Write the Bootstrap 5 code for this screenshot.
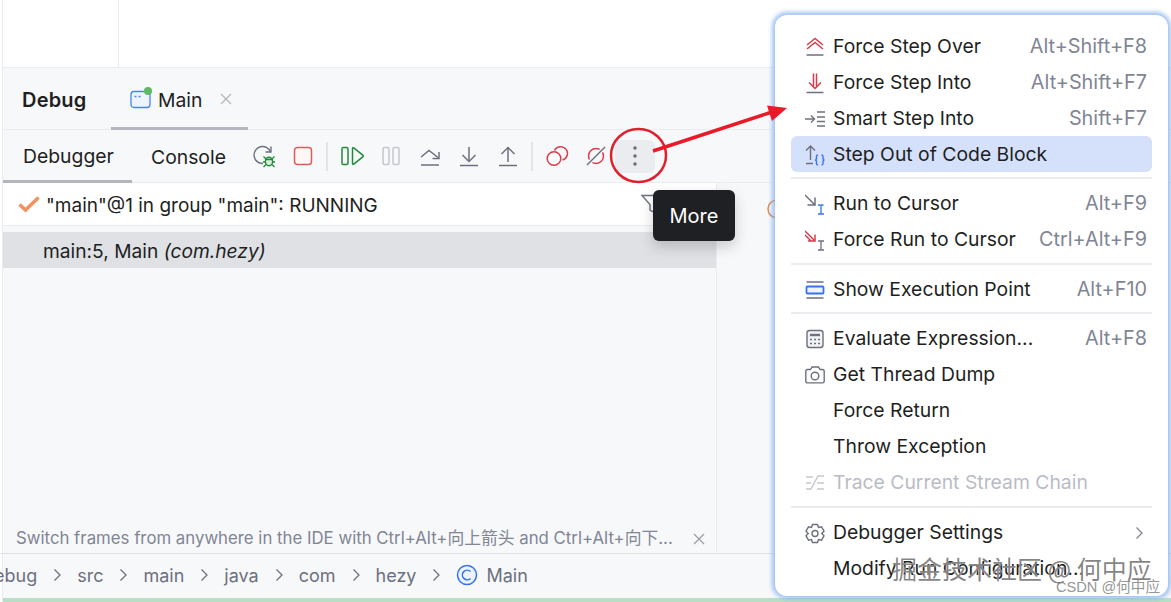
<!doctype html>
<html lang="en">
<head>
<meta charset="utf-8">
<title>Debug</title>
<link href="https://cdn.jsdelivr.net/npm/bootstrap@5.3.0/dist/css/bootstrap.min.css" rel="stylesheet">
<style>
html,body{height:602px;overflow:hidden;background:#fff}
body{font-family:Inter,"Noto Sans CJK SC",sans-serif;color:#1e1f22;font-size:19.35px;position:relative}
svg{display:block;flex:none}
.ide-shell{height:602px;margin-left:2px;border-left:1px solid #ebecf0;background:#f7f8fa}
.editor-strip{height:68px;background:#fff;border-bottom:1px solid #ebecf0}
.editor-gutter{width:116px;height:67px;border-right:1px solid #ebecf0}
.tool-head{height:62px;border-bottom:1px solid #ebecf0}
.tool-title{width:108px;padding:2px 0 0 19px;font-weight:600;font-size:20px;letter-spacing:.2px}
.main-tab{width:137px;height:62px;border-bottom:3px solid #b4b6bd;padding:2px 0 0 19px;gap:6px;margin-bottom:-1px}
.main-tab span{padding-top:5px}
.main-tab .x-mark{margin-left:11px}
.tool-bar{height:53px;border-bottom:1px solid #ebecf0}
.sub-tab{height:53px;padding:3px 0 0 20px;width:129px;border-bottom:3px solid #b4b6bd;margin-bottom:-1px}
.sub-tab-plain{width:112px;padding:3px 0 0 19px}
.ico-btn{width:39px;height:33px;border-radius:6px}
.ico-btn.hovered{background:#ebecf0;width:40px}
.tb-sep{width:10px}
.tb-sep i{display:block;width:2px;height:29px;background:#e3e5ea}
.work-area{height:370px}
.frames-pane{width:714px;border-right:1px solid #ebecf0}
.thread-row{height:43px;background:#fff;border-bottom:1px solid #ebecf0;padding:0 0 0 15px;gap:6px;font-size:19px}
.thread-row span{padding-top:5px}
.filter-ico{margin-right:52px}
.frame-row{height:36px;margin-top:6px;background:#dfe1e5;padding:3px 0 0 40px;font-size:19.2px}
.hint-row{padding:3px 11px 0 13px;color:#818594;font-size:16.8px;height:32px}
.side-arc{margin-left:50px}
.crumbs{height:45px;color:#6c707e;font-size:18px;margin-left:-9px;padding-bottom:2px}
.crumbs span{white-space:nowrap}
.crumb-gap{margin:0 16px}
.status-line{height:4px;background:#b8dfc6}
.tip-more{position:absolute;left:653px;top:190px;width:82px;height:51px;background:#1f2024;color:#fff;font-size:20px;border-radius:6px;box-shadow:0 6px 14px rgba(0,0,0,.18);z-index:5}
.dropdown-menu.debug-menu{position:absolute;left:775px;top:15px;width:393px;height:581px;margin:0;padding:13px 16px;background:#fff;border:0;border-radius:12px;box-shadow:0 0 4px 3px rgba(130,175,240,.75);z-index:6;--bs-dropdown-font-size:19.35px}
.debug-menu .dropdown-item{height:36px;padding:1px 5px 0 14px;gap:8px;color:#1e1f22;font-size:19.35px;border-radius:6px;background:transparent}
.debug-menu .dropdown-item.active{background:#d5e1fb;color:#1e1f22}
.debug-menu .dropdown-item.disabled{color:#b9bcc6}
.debug-menu .dropdown-divider{margin:5px 0 6.5px;height:2px;border-top:2px solid #ebecf0;opacity:1}
.ico-slot{width:20px;height:22px}
.key-hint{margin-left:auto;color:#818594;font-size:19.85px}
.pen-layer{position:absolute;left:0;top:0;z-index:7;pointer-events:none}
.stamp-big{position:absolute;left:892px;top:551px;font-size:25px;color:rgba(70,70,70,.66);z-index:8;font-family:"Noto Sans CJK SC",sans-serif;line-height:34px;white-space:nowrap;text-shadow:0 0 1px #fff}
.stamp-small{position:absolute;left:1056px;top:578px;font-size:14.6px;color:rgba(120,120,120,.8);z-index:8;line-height:18px;font-family:"Liberation Sans","Noto Sans CJK SC",sans-serif;white-space:nowrap}
</style>
</head>
<body>
<div class="ide-shell d-flex flex-column">
  <div class="editor-strip"><div class="editor-gutter"></div></div>

  <div class="tool-head d-flex align-items-center">
    <div class="tool-title">Debug</div>
    <div class="main-tab d-flex align-items-center">
      <svg width="22" height="24" viewBox="0 0 22 24"><rect x="1" y="4.500" width="19" height="16" rx="3" fill="#edf3ff" stroke="#4682fa" stroke-width="1.300"/><path d="M4.500 9.500h2M8.500 9.500h2" stroke="#4682fa" stroke-width="1.300"/><circle cx="18" cy="4" r="4" fill="#5fb865"/></svg>
      <span>Main</span>
      <svg class="x-mark" width="14" height="14" viewBox="0 0 14 14"><path d="M2 2l10 10M12 2L2 12" stroke="#b4b8bf" stroke-width="1.400"/></svg>
    </div>
  </div>

  <div class="tool-bar d-flex align-items-center">
    <div class="sub-tab d-flex align-items-center">Debugger</div>
    <div class="sub-tab-plain">Console</div>
    <div class="ico-btn d-flex align-items-center justify-content-center">
      <svg width="26" height="26" viewBox="0 0 26 26" fill="none"><path d="M12 20.500A8.500 8.500 0 1 1 19.500 9" stroke="#6c707e" stroke-width="1.400"/><path d="M20 3.500V9h-5.500" stroke="#6c707e" stroke-width="1.400"/><ellipse cx="18" cy="18.500" rx="3.600" ry="4.200" fill="#d8f0dc" stroke="#208a3c" stroke-width="1.400"/><path d="M12.500 13.500l2.500 2.500M23.500 13.500L21 16M12 19h2.500M24 19h-2.500M12.500 24l2.500-2.500M23.500 24L21 21.500M14.500 16.500h7" stroke="#208a3c" stroke-width="1.300"/></svg>
    </div>
    <div class="ico-btn d-flex align-items-center justify-content-center">
      <svg width="24" height="24" viewBox="0 0 24 24"><rect x="3.500" y="3.500" width="17" height="17" rx="3" fill="#fff6f6" stroke="#db5c5c" stroke-width="1.500"/></svg>
    </div>
    <div class="tb-sep d-flex justify-content-center"><i></i></div>
    <div class="ico-btn d-flex align-items-center justify-content-center">
      <svg width="26" height="24" viewBox="0 0 26 24" fill="none" stroke="#208a3c" stroke-width="1.500"><rect x="3" y="3.500" width="6" height="17" rx="1.500"/><path d="M13.500 4.500v15a.8.8 0 0 0 1.300.6L24 12.700a1 1 0 0 0 0-1.400L14.800 3.900a.8.8 0 0 0-1.300.6z"/></svg>
    </div>
    <div class="ico-btn d-flex align-items-center justify-content-center">
      <svg width="24" height="24" viewBox="0 0 24 24" fill="none" stroke="#c4c7ce" stroke-width="1.500"><rect x="4" y="3.500" width="6" height="17" rx="1.500"/><rect x="14" y="3.500" width="6" height="17" rx="1.500"/></svg>
    </div>
    <div class="ico-btn d-flex align-items-center justify-content-center">
      <svg width="24" height="24" viewBox="0 0 24 24" fill="none" stroke="#6c707e" stroke-width="1.500"><path d="M3 13l8-6.500L20 13.500"/><path d="M21 8v6.500h-6.500"/><path d="M3 21h18"/></svg>
    </div>
    <div class="ico-btn d-flex align-items-center justify-content-center">
      <svg width="24" height="24" viewBox="0 0 24 24" fill="none" stroke="#6c707e" stroke-width="1.500"><path d="M12 3v14"/><path d="M5.500 11l6.500 6.500 6.500-6.500"/><path d="M3 21.500h18"/></svg>
    </div>
    <div class="ico-btn d-flex align-items-center justify-content-center">
      <svg width="24" height="24" viewBox="0 0 24 24" fill="none" stroke="#6c707e" stroke-width="1.500"><path d="M12 18V3.500"/><path d="M5.500 10L12 3.500 18.500 10"/><path d="M3 21.500h18"/></svg>
    </div>
    <div class="tb-sep d-flex justify-content-center"><i></i></div>
    <div class="ico-btn d-flex align-items-center justify-content-center">
      <svg width="24" height="24" viewBox="0 0 24 24" fill="none" stroke="#db3b4b" stroke-width="1.500"><circle cx="9" cy="14.500" r="6.800" fill="#fff"/><path d="M9.500 6.500a6.800 6.800 0 1 1 8 9.500"/></svg>
    </div>
    <div class="ico-btn d-flex align-items-center justify-content-center">
      <svg width="24" height="24" viewBox="0 0 24 24" fill="none" stroke-width="1.500"><circle cx="12" cy="12" r="7.500" stroke="#db3b4b"/><path d="M3 21L21 3" stroke="#f7f8fa" stroke-width="4"/><path d="M3 21L21 3" stroke="#6c707e"/></svg>
    </div>
    <div class="ico-btn hovered d-flex align-items-center justify-content-center">
      <svg width="6" height="22" viewBox="0 0 6 22" fill="#6c707e"><circle cx="3" cy="3" r="1.800"/><circle cx="3" cy="11" r="1.800"/><circle cx="3" cy="19" r="1.800"/></svg>
    </div>
  </div>

  <div class="work-area d-flex">
    <div class="frames-pane d-flex flex-column">
      <div class="thread-row d-flex align-items-center">
        <svg width="22" height="18" viewBox="0 0 22 18" fill="none"><path d="M1.500 9.500l6 5.500L20.500 2.500" stroke="#f0935f" stroke-width="3.500"/></svg>
        <span class="flex-grow-1">"main"@1 in group "main": RUNNING</span>
        <svg class="filter-ico" width="24" height="22" viewBox="0 0 24 22" fill="#fff" stroke="#6c707e" stroke-width="1.400"><path d="M2 2.500h20l-7.500 9v8l-4.500-2.500v-5.500z"/></svg>
      </div>
      <div class="frame-row d-flex align-items-center"><span>main:5, Main <em>(com.hezy)</em></span></div>
      <div class="hint-row mt-auto d-flex align-items-center justify-content-between">
        <span>Switch frames from anywhere in the IDE with Ctrl+Alt+向上箭头 and Ctrl+Alt+向下...</span>
        <svg width="12" height="12" viewBox="0 0 12 12"><path d="M1 1l10 10M11 1L1 11" stroke="#9a9ea8" stroke-width="1.300"/></svg>
      </div>
    </div>
    <div class="flex-grow-1 pt-3">
      <svg class="side-arc" width="10" height="20" viewBox="0 0 10 20" fill="none"><path d="M10 1A9 9 0 0 0 10 19" stroke="#e08855" stroke-width="1.500"/></svg>
    </div>
  </div>

  <div class="crumbs d-flex align-items-center border-top">
    <span>ebug</span>
    <svg class="crumb-gap" width="8" height="14" viewBox="0 0 8 14" fill="none"><path d="M1.500 1.500L7 7l-5.500 5.500" stroke="#6c707e" stroke-width="1.300"/></svg>
    <span>src</span>
    <svg class="crumb-gap" width="8" height="14" viewBox="0 0 8 14" fill="none"><path d="M1.500 1.500L7 7l-5.500 5.500" stroke="#6c707e" stroke-width="1.300"/></svg>
    <span>main</span>
    <svg class="crumb-gap" width="8" height="14" viewBox="0 0 8 14" fill="none"><path d="M1.500 1.500L7 7l-5.500 5.500" stroke="#6c707e" stroke-width="1.300"/></svg>
    <span>java</span>
    <svg class="crumb-gap" width="8" height="14" viewBox="0 0 8 14" fill="none"><path d="M1.500 1.500L7 7l-5.500 5.500" stroke="#6c707e" stroke-width="1.300"/></svg>
    <span>com</span>
    <svg class="crumb-gap" width="8" height="14" viewBox="0 0 8 14" fill="none"><path d="M1.500 1.500L7 7l-5.500 5.500" stroke="#6c707e" stroke-width="1.300"/></svg>
    <span>hezy</span>
    <svg class="crumb-gap" width="8" height="14" viewBox="0 0 8 14" fill="none"><path d="M1.500 1.500L7 7l-5.500 5.500" stroke="#6c707e" stroke-width="1.300"/></svg>
    <svg class="me-2" width="22" height="22" viewBox="0 0 22 22" fill="#edf3ff" stroke="#3574f0" stroke-width="1.500"><circle cx="11" cy="11" r="9.500"/><path d="M14.500 7.500a4.800 4.800 0 1 0 0 7" fill="none"/></svg>
    <span>Main</span>
  </div>
  <div class="status-line"></div>
</div>

<div class="tip-more d-flex align-items-center justify-content-center">More</div>

<div class="dropdown-menu show debug-menu">
  <div class="dropdown-item d-flex align-items-center">
    <span class="ico-slot d-flex align-items-center"><svg width="20" height="22" viewBox="0 0 20 22" fill="none" stroke="#db3b4b" stroke-width="1.500"><path d="M2 9l8-6.500L18 9"/><path d="M2 13l8-6.500L18 13"/><path d="M1.500 19h17" stroke="#6c707e"/></svg></span>
    <span>Force Step Over</span><span class="key-hint">Alt+Shift+F8</span>
  </div>
  <div class="dropdown-item d-flex align-items-center">
    <span class="ico-slot d-flex align-items-center"><svg width="20" height="22" viewBox="0 0 20 22" fill="none" stroke="#db3b4b" stroke-width="1.500"><path d="M8.500 1.500v13M11.500 1.500v13"/><path d="M4 10.500l6 6 6-6"/><path d="M1.500 20.500h17" stroke="#6c707e"/></svg></span>
    <span>Force Step Into</span><span class="key-hint">Alt+Shift+F7</span>
  </div>
  <div class="dropdown-item d-flex align-items-center">
    <span class="ico-slot d-flex align-items-center"><svg width="20" height="22" viewBox="0 0 20 22" fill="none" stroke="#6c707e" stroke-width="1.400"><path d="M0 11h9M6 7.500L9.500 11 6 14.500"/><path d="M12 4h8M12 9h8M12 13.500h8M12 18h8"/></svg></span>
    <span>Smart Step Into</span><span class="key-hint">Shift+F7</span>
  </div>
  <div class="dropdown-item active d-flex align-items-center">
    <span class="ico-slot d-flex align-items-center"><svg width="20" height="22" viewBox="0 0 20 22" fill="none" stroke="#6c707e" stroke-width="1.400"><path d="M5.500 16V2M1 6.500L5.500 2 10 6.500M1 19.500h7"/><path d="M13 11c-2 0-1.500 2-1.500 3.500 0 1-.5 1.500-1.500 1.500 1 0 1.500.5 1.500 1.500 0 1.500-.5 3.500 1.500 3.500M16.500 11c2 0 1.500 2 1.500 3.500 0 1 .5 1.500 1.500 1.500-1 0-1.500.5-1.500 1.500 0 1.500.5 3.500-1.500 3.500" stroke="#3574f0"/></svg></span>
    <span>Step Out of Code Block</span>
  </div>
  <div class="dropdown-divider"></div>
  <div class="dropdown-item d-flex align-items-center">
    <span class="ico-slot d-flex align-items-center"><svg width="20" height="22" viewBox="0 0 20 22" fill="none" stroke-width="1.500"><path d="M0 2l10 10M10 4.500V12H2.500" stroke="#6c707e"/><path d="M13 12h2.500M18.500 12H16M16 12v9M13 21h6" stroke="#3574f0" stroke-width="1.300"/></svg></span>
    <span>Run to Cursor</span><span class="key-hint">Alt+F9</span>
  </div>
  <div class="dropdown-item d-flex align-items-center">
    <span class="ico-slot d-flex align-items-center"><svg width="20" height="22" viewBox="0 0 20 22" fill="none" stroke-width="1.500"><path d="M0 2l10 10M10 5.500V12H3M0 6l6 6" stroke="#db3b4b"/><path d="M13 12h6M16 12v9M13 21h6" stroke="#6c707e" stroke-width="1.300"/></svg></span>
    <span>Force Run to Cursor</span><span class="key-hint">Ctrl+Alt+F9</span>
  </div>
  <div class="dropdown-divider"></div>
  <div class="dropdown-item d-flex align-items-center">
    <span class="ico-slot d-flex align-items-center"><svg width="20" height="22" viewBox="0 0 20 22" fill="none" stroke-width="1.500"><path d="M1.500 3h17M1.500 19h17" stroke="#6c707e"/><rect x="1.500" y="7.500" width="17" height="7" rx="1" fill="#edf3ff" stroke="#3574f0" stroke-width="1.800"/></svg></span>
    <span>Show Execution Point</span><span class="key-hint">Alt+F10</span>
  </div>
  <div class="dropdown-divider"></div>
  <div class="dropdown-item d-flex align-items-center">
    <span class="ico-slot d-flex align-items-center"><svg width="20" height="22" viewBox="0 0 20 22" fill="none" stroke="#6c707e" stroke-width="1.400"><rect x="2" y="2.500" width="16" height="17" rx="2.500" fill="#f2f3f5"/><path d="M5 7h10" stroke-width="2.400"/><path d="M5 11.500h2M9 11.500h2M13 11.500h2M5 15.500h2M9 15.500h2M13 15.500h2" stroke-width="1.600"/></svg></span>
    <span>Evaluate Expression...</span><span class="key-hint">Alt+F8</span>
  </div>
  <div class="dropdown-item d-flex align-items-center">
    <span class="ico-slot d-flex align-items-center"><svg width="20" height="22" viewBox="0 0 20 22" fill="none" stroke="#6c707e" stroke-width="1.400"><path d="M2.500 5.500h3L7 3h6.500l1.500 2.500h2.500a1.700 1.700 0 0 1 1.700 1.700v10a1.700 1.700 0 0 1-1.700 1.700H2.500A1.700 1.700 0 0 1 .8 17.200v-10a1.700 1.700 0 0 1 1.700-1.700z"/><circle cx="10" cy="12" r="3.800"/></svg></span>
    <span>Get Thread Dump</span>
  </div>
  <div class="dropdown-item d-flex align-items-center"><span class="ico-slot"></span><span>Force Return</span></div>
  <div class="dropdown-item d-flex align-items-center"><span class="ico-slot"></span><span>Throw Exception</span></div>
  <div class="dropdown-item disabled d-flex align-items-center">
    <span class="ico-slot d-flex align-items-center"><svg width="20" height="22" viewBox="0 0 20 22" fill="none" stroke="#c4c7ce" stroke-width="1.400"><path d="M1 17h5L13 4h6M1 5h7M1 11h5M12 11h7M12 17h7"/></svg></span>
    <span>Trace Current Stream Chain</span>
  </div>
  <div class="dropdown-divider"></div>
  <div class="dropdown-item d-flex align-items-center">
    <span class="ico-slot d-flex align-items-center"><svg width="20" height="22" viewBox="0 0 20 22" fill="none" stroke="#6c707e" stroke-width="1.400"><path d="M7.500 2.500h5l1 3 3-.7 2.500 4.400-2.200 2.300 2.200 2.300-2.500 4.400-3-.7-1 3h-5l-1-3-3 .7L1 13.800l2.200-2.300L1 9.200l2.500-4.400 3 .7z"/><circle cx="10" cy="11.500" r="3"/></svg></span>
    <span>Debugger Settings</span>
    <svg class="key-hint me-1" width="8" height="14" viewBox="0 0 8 14" fill="none"><path d="M1.500 1.500L7 7l-5.500 5.500" stroke="#818594" stroke-width="1.300"/></svg>
  </div>
  <div class="dropdown-item d-flex align-items-center"><span class="ico-slot"></span><span>Modify Run Configuration...</span></div>
</div>

<svg class="pen-layer" width="1171" height="602" viewBox="0 0 1171 602" fill="none">
  <ellipse cx="638.500" cy="155.500" rx="27.500" ry="26.500" stroke="#e0202c" stroke-width="2.500"/>
  <path d="M653 151L772 112" stroke="#e81c28" stroke-width="3.500"/>
  <path d="M787 108L767 105.500 772 121z" fill="#e81c28"/>
</svg>

<div class="stamp-big">掘金技术社区 @ 何中应</div>
<div class="stamp-small">CSDN @何中应</div>

<script src="https://cdn.jsdelivr.net/npm/bootstrap@5.3.0/dist/js/bootstrap.bundle.min.js"></script>
</body>
</html>
